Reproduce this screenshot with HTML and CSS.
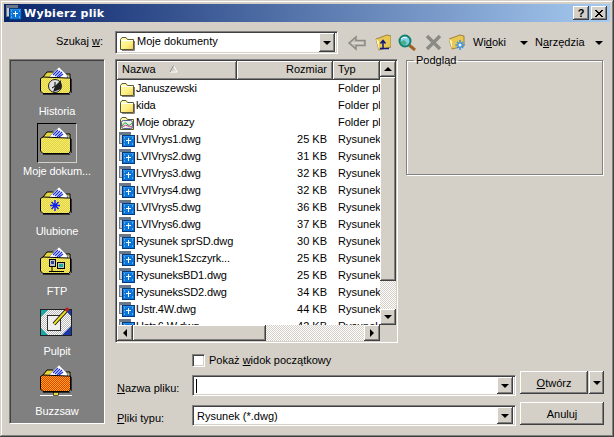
FILE: index.html
```html
<!DOCTYPE html>
<html lang="pl">
<head>
<meta charset="utf-8">
<title>Wybierz plik</title>
<link rel="stylesheet" href="styles.css">
</head>
<body>
<svg class="defs" width="0" height="0" aria-hidden="true">
  <defs>
    <pattern id="dy" width="2" height="2" patternUnits="userSpaceOnUse"><rect width="2" height="2" fill="#fff040"/><rect width="1" height="1" fill="#d8d070"/><rect x="1" y="1" width="1" height="1" fill="#d8d070"/></pattern>
    <pattern id="do" width="2" height="2" patternUnits="userSpaceOnUse"><rect width="2" height="2" fill="#ffb800"/><rect width="1" height="1" fill="#f03010"/><rect x="1" y="1" width="1" height="1" fill="#f03010"/></pattern>
    <pattern id="dg" width="2" height="2" patternUnits="userSpaceOnUse"><rect width="2" height="2" fill="#fff"/><rect width="1" height="1" fill="#b8b8b8"/><rect x="1" y="1" width="1" height="1" fill="#b8b8b8"/></pattern>
    <symbol id="fback" viewBox="0 0 32 32">
      <path d="M3 12 L7 7 H13 L15 9 L22 9 L30 9 V16 H3Z" fill="#e8d840" stroke="#000" stroke-width="1"/>
      <path d="M9 12 L19 2 L28 11 V16 H9Z" fill="#fff" stroke="#808080" stroke-width=".6"/>
      <path d="M13 10 L18 5 M15 11 L20 6 M17 12 L22 7 M19 12 L23 9" stroke="#1830e0" stroke-width="1.2" fill="none"/>
      <path d="M27 9 L31 14 L28 16Z" fill="#fff" stroke="#404040" stroke-width=".6"/>
    </symbol>
    <symbol id="ffront" viewBox="0 0 32 32">
      <path d="M.5 13.5 L3 12 L27 13 H30.5 V26 L29 28.500 H3 L.5 26Z" stroke="#000" stroke-width="1"/>
      <path d="M3 29.500 H30 M31.500 14 V28" stroke="#303030" stroke-width="1" fill="none"/>
    </symbol>
    <symbol id="fold16" viewBox="0 0 16 16">
      <path d="M1.500 4.500 L3 2.500 H7 L8.500 4.500 H14.500 V14.500 H1.500Z" fill="url(#fs)" stroke="#5a5a30"/>
      <path d="M2 5.500 H14" stroke="#fff"/>
      <path d="M15.500 6 V15.500 H3" stroke="#808080" fill="none"/>
    </symbol>
    <linearGradient id="fs" x1="0" y1="0" x2="1" y2="1"><stop offset="0" stop-color="#fffbc0"/><stop offset=".6" stop-color="#fff080"/><stop offset="1" stop-color="#f0c860"/></linearGradient>
    <symbol id="pics16" viewBox="0 0 16 16">
      <path d="M1.500 4.500 L3 2.500 H7 L8.500 4.500 H14.500 V14.500 H1.500Z" fill="url(#fs)" stroke="#5a5a30"/>
      <rect x="2.500" y="5.500" width="11" height="8" rx="2" fill="#e8f0e0" stroke="#5060a0"/>
      <path d="M3 11 Q6 6 8 9 T13 8" stroke="#20a040" fill="none"/>
      <path d="M3 12 Q7 9 9 11 T13 11" stroke="#d040a0" fill="none"/>
    </symbol>
    <symbol id="dwg" viewBox="0 0 16 16">
      <rect x=".5" y=".5" width="11" height="11" fill="#c8ccd4" stroke="#707880"/>
      <rect x="1" y="1" width="10" height="2" fill="#68788c"/>
      <rect x="3.500" y="3.500" width="12" height="11" fill="#0a74d8" stroke="#063a78"/>
      <rect x="4" y="4" width="11" height="1" fill="#2a90e8"/>
      <path d="M9.500 6 V12 M7 8.500 H12" stroke="#fff"/>
      <path d="M5 6h1M13 6h1M5 12h1M13 12h1M5 9h1" stroke="#a8e0ff"/>
    </symbol>
  </defs>
</svg>
<div class="dialog">
  <header class="titlebar">
    <svg class="title-icon" width="16" height="16"><use href="#dwg"/></svg>
    <span class="title-text">Wybierz plik</span>
    <span class="cap-btn cap-help">?</span>
    <span class="cap-btn cap-close">
      <svg width="8" height="7" viewBox="0 0 8 7"><path d="M0 0 L7 7 M1 0 L8 7 M7 0 L0 7 M8 0 L1 7" stroke="#000"/></svg>
    </span>
  </header>
  <div class="body">
    <aside class="left">
      <div class="look-in">Szukaj <u>w</u>:</div>
      <nav class="places">
        <div class="place">
          <div class="place-box">
            <svg width="32" height="32" viewBox="0 0 32 32"><use href="#fback"/><use href="#ffront" fill="url(#dy)"/>
              <circle cx="15" cy="21" r="6.500" fill="#e0e0e0" stroke="#202020"/><path d="M15 21 L21 15 L21 24 L13 27Z" fill="#202020"/><path d="M15 17 V21 L12 23" stroke="#000" fill="none"/></svg>
          </div>
          <span>Historia</span>
        </div>
        <div class="place">
          <div class="place-box selected">
            <svg width="32" height="32" viewBox="0 0 32 32"><use href="#fback"/><use href="#ffront" fill="url(#dy)"/></svg>
          </div>
          <span>Moje dokum...</span>
        </div>
        <div class="place">
          <div class="place-box">
            <svg width="32" height="32" viewBox="0 0 32 32"><use href="#fback"/><use href="#ffront" fill="url(#dy)"/>
              <path d="M15 15 V26 M10 20.500 H20 M11.500 17 L18.500 24 M18.500 17 L11.500 24" stroke="#1020f0" stroke-width="1.400"/></svg>
          </div>
          <span>Ulubione</span>
        </div>
        <div class="place">
          <div class="place-box">
            <svg width="32" height="32" viewBox="0 0 32 32"><use href="#fback"/><use href="#ffront" fill="url(#dy)"/>
              <rect x="9.500" y="14.500" width="6" height="7" fill="#c0c0c0" stroke="#000"/><rect x="11" y="16" width="3" height="3" fill="#3040a0"/>
              <rect x="17.500" y="17.500" width="7" height="6" fill="#c0c0c0" stroke="#000"/><rect x="19" y="19" width="4" height="3" fill="#10b0a0"/>
              <path d="M9 26.500 H24 M12 22 V26" stroke="#000"/></svg>
          </div>
          <span>FTP</span>
        </div>
        <div class="place">
          <div class="place-box">
            <svg width="32" height="32" viewBox="0 0 32 32">
              <rect x=".5" y="4.500" width="31" height="26" fill="url(#dg)" stroke="#202020"/>
              <path d="M1 5 H8 L1 12Z M1 30 H8 L1 23Z" fill="#18a8a8"/>
              <path d="M31 5 H25 L31 11Z M31 30 H22 L31 21Z" fill="#1838a8"/>
              <rect x="7.500" y="10.500" width="13" height="15" fill="#f0f0f0" stroke="#303030"/>
              <path d="M14 19 L26 6" stroke="#000" stroke-width="3.500"/><path d="M14 19 L26 6" stroke="#f0e020" stroke-width="2"/>
              <circle cx="27" cy="4.500" r="2" fill="#b82020"/>
            </svg>
          </div>
          <span>Pulpit</span>
        </div>
        <div class="place">
          <div class="place-box">
            <svg width="32" height="32" viewBox="0 0 32 32">
              <g transform="translate(0 -2)"><use href="#fback"/><use href="#ffront" fill="url(#do)"/></g>
              <path d="M0 30.500 H32" stroke="#fff"/><rect x="13.500" y="27.500" width="5" height="3" fill="#e8d840" stroke="#000" stroke-width=".6"/></svg>
          </div>
          <span>Buzzsaw</span>
        </div>
      </nav>
    </aside>
    <main class="right">
      <div class="toolbar">
        <div class="combo combo-look">
          <svg width="16" height="16"><use href="#fold16"/></svg>
          <span class="combo-value">Moje dokumenty</span>
          <span class="drop"><i class="tri-down"></i></span>
        </div>
        <div class="tools">
          <svg width="21" height="17" viewBox="0 0 21 17"><path d="M2 9 L9 3 V6.500 H18 V11.500 H9 V15Z" fill="#c4c0b8" stroke="#8c8a84" stroke-width="1.500"/><path d="M5 9 H16" stroke="#eceae4"/></svg>
          <svg width="16" height="17" viewBox="0 0 16 17"><path d="M1 5 L12 1 L16 2 V13 L4 16 Z" fill="#e8c850" stroke="#a08040"/><path d="M1 5 L4 16 V7Z" fill="#fff4b0"/><path d="M5 14.500 H14 M8 14.500 V7 M5.500 9.500 L8 6.500 L10.500 9.500" stroke="#101880" stroke-width="1.500" fill="none"/></svg>
          <svg width="20" height="17" viewBox="0 0 20 17"><path d="M11 11 L17 16" stroke="#a06020" stroke-width="3"/><circle cx="7" cy="7" r="5.500" fill="#80d0e8" stroke="#108070" stroke-width="2"/><path d="M3 5 Q6 2 9 4" stroke="#fff" fill="none"/><path d="M2 8 L6 6 L9 9 L6 12Z" fill="#30a060" opacity=".7"/></svg>
          <svg width="17" height="17" viewBox="0 0 17 17"><path d="M2 2 L15 15 M15 2 L2 15" stroke="#8c8a84" stroke-width="3.500"/></svg>
          <svg width="17" height="17" viewBox="0 0 17 17"><path d="M0 5 L11 1 L15 2 V12 L3 15Z" fill="#e8c850" stroke="#a08040"/><path d="M0 5 L3 15 V7Z" fill="#fff4b0"/><path d="M11 6 V16 M6.500 11 H15.500 M8 8 L14 14 M14 8 L8 14" stroke="#3090f0" stroke-width="1.500"/><circle cx="11" cy="11" r="1.500" fill="#fff"/></svg>
          <span class="menu menu-views"><span>Wi<u>d</u>oki</span><i class="tri-down"></i></span>
          <span class="menu menu-tools"><span>N<u>a</u>rzędzia</span><i class="tri-down"></i></span>
        </div>
      </div>
      <div class="middle">
        <section class="filelist">
          <div class="list-main">
            <div class="list-content">
              <div class="list-header">
                <div class="hcell hname">Nazwa<svg class="sort" width="9" height="8" viewBox="0 0 9 8"><path d="M4.500 .5 L8 7 H1Z" fill="none" stroke="#fff"/><path d="M4.500 .5 L1 7" stroke="#808080" fill="none"/></svg></div>
                <div class="hcell hsize">Rozmiar</div>
                <div class="hcell htype">Typ</div>
              </div>
              <div class="row"><div class="cname"><svg width="16" height="16"><use href="#fold16"/></svg>Januszewski</div><div class="csize"></div><div class="ctype">Folder plików</div></div>
              <div class="row"><div class="cname"><svg width="16" height="16"><use href="#fold16"/></svg>kida</div><div class="csize"></div><div class="ctype">Folder plików</div></div>
              <div class="row"><div class="cname"><svg width="16" height="16"><use href="#pics16"/></svg>Moje obrazy</div><div class="csize"></div><div class="ctype">Folder plików</div></div>
              <div class="row"><div class="cname"><svg width="16" height="16"><use href="#dwg"/></svg>LVIVrys1.dwg</div><div class="csize">25 KB</div><div class="ctype">Rysunek</div></div>
              <div class="row"><div class="cname"><svg width="16" height="16"><use href="#dwg"/></svg>LVIVrys2.dwg</div><div class="csize">31 KB</div><div class="ctype">Rysunek</div></div>
              <div class="row"><div class="cname"><svg width="16" height="16"><use href="#dwg"/></svg>LVIVrys3.dwg</div><div class="csize">32 KB</div><div class="ctype">Rysunek</div></div>
              <div class="row"><div class="cname"><svg width="16" height="16"><use href="#dwg"/></svg>LVIVrys4.dwg</div><div class="csize">32 KB</div><div class="ctype">Rysunek</div></div>
              <div class="row"><div class="cname"><svg width="16" height="16"><use href="#dwg"/></svg>LVIVrys5.dwg</div><div class="csize">36 KB</div><div class="ctype">Rysunek</div></div>
              <div class="row"><div class="cname"><svg width="16" height="16"><use href="#dwg"/></svg>LVIVrys6.dwg</div><div class="csize">37 KB</div><div class="ctype">Rysunek</div></div>
              <div class="row"><div class="cname"><svg width="16" height="16"><use href="#dwg"/></svg>Rysunek sprSD.dwg</div><div class="csize">30 KB</div><div class="ctype">Rysunek</div></div>
              <div class="row"><div class="cname"><svg width="16" height="16"><use href="#dwg"/></svg>Rysunek1Szczyrk...</div><div class="csize">25 KB</div><div class="ctype">Rysunek</div></div>
              <div class="row"><div class="cname"><svg width="16" height="16"><use href="#dwg"/></svg>RysuneksBD1.dwg</div><div class="csize">25 KB</div><div class="ctype">Rysunek</div></div>
              <div class="row"><div class="cname"><svg width="16" height="16"><use href="#dwg"/></svg>RysuneksSD2.dwg</div><div class="csize">34 KB</div><div class="ctype">Rysunek</div></div>
              <div class="row"><div class="cname"><svg width="16" height="16"><use href="#dwg"/></svg>Ustr.4W.dwg</div><div class="csize">44 KB</div><div class="ctype">Rysunek</div></div>
              <div class="row"><div class="cname"><svg width="16" height="16"><use href="#dwg"/></svg>Ustr.6.W.dwg</div><div class="csize">42 KB</div><div class="ctype">Rysunek</div></div>
            </div>
            <div class="vbar">
              <span class="sbtn"><i class="tri-up"></i></span>
              <span class="vthumb"></span>
              <span class="vtrack"></span>
              <span class="sbtn"><i class="tri-down"></i></span>
            </div>
          </div>
          <div class="hbar">
            <span class="sbtn"><i class="tri-left"></i></span>
            <span class="hthumb"></span>
            <span class="htrack"></span>
            <span class="sbtn"><i class="tri-right"></i></span>
            <span class="corner"></span>
          </div>
        </section>
        <fieldset class="preview"><legend>Podgląd</legend></fieldset>
      </div>
      <form class="form">
        <label class="show-start"><span class="checkbox"></span><span>Pokaż <u>w</u>idok początkowy</span></label>
        <div class="form-grid">
          <span class="flabel"><u>N</u>azwa pliku:</span>
          <div class="combo combo-field"><span class="caret"></span><span class="drop"><i class="tri-down"></i></span></div>
          <div class="btn-split"><span class="btn btn-open"><span><u>O</u>twórz</span></span><span class="btn btn-more"><i class="tri-down"></i></span></div>
          <span class="flabel"><u>P</u>liki typu:</span>
          <div class="combo combo-field"><span class="combo-value">Rysunek (*.dwg)</span><span class="drop"><i class="tri-down"></i></span></div>
          <span class="btn btn-cancel">Anuluj</span>
        </div>
      </form>
    </main>
  </div>
</div>
</body>
</html>
```

FILE: styles.css
```css
* { box-sizing: border-box; }
html, body { margin: 0; padding: 0; }
body {
  width: 614px;
  height: 437px;
  overflow: hidden;
  background: #d4d0c8;
  font: 11px/13px "Liberation Sans", Arial, sans-serif;
  color: #000;
}
.defs { display: block; width: 0; height: 0; }
i { display: block; font-style: normal; }

.dialog {
  width: 614px;
  height: 437px;
  padding: 4px 4px 0;
  background: #d4d0c8;
  box-shadow: inset -1px -1px #404040, inset 1px 1px #d4d0c8, inset -2px -2px #808080, inset 2px 2px #fff;
  overflow: hidden;
}

.titlebar {
  height: 18px;
  display: flex;
  align-items: center;
  padding: 0 3px 0 2px;
  background: linear-gradient(90deg, #0a246a, #a6caf0);
  color: #fff;
  font-weight: bold;
}
.title-icon { flex: none; }
.title-text {
  margin-left: 2px;
  flex: 1;
  font-family: "DejaVu Sans", sans-serif;
  letter-spacing: 0.3px;
}
.cap-btn {
  width: 16px;
  height: 14px;
  display: flex;
  align-items: center;
  justify-content: center;
  background: #d4d0c8;
  color: #000;
  font-size: 11px;
  box-shadow: inset -1px -1px #404040, inset 1px 1px #fff, inset -2px -2px #808080;
}
.cap-help { margin-right: 2px; }

.body {
  display: flex;
  gap: 10px;
  padding: 9px 0 0 5px;
}

.left { width: 96px; flex: none; }
.look-in {
  height: 23px;
  margin-bottom: 5px;
  margin-right: 2px;
  text-align: right;
  line-height: 21px;
}
.places {
  height: 365px;
  padding: 3px 2px 0;
  background: #808080;
  color: #fff;
  border: 1px solid;
  border-color: #808080 #fff #fff #808080;
  box-shadow: inset 1px 1px #404040;
}
.place {
  height: 60px;
  display: flex;
  flex-direction: column;
  align-items: center;
  letter-spacing: -0.1px;
}
.place span { margin-top: 2px; white-space: nowrap; }
.place-box {
  width: 40px;
  height: 40px;
  display: flex;
  align-items: center;
  justify-content: center;
  padding: 0 2px 4px 0;
}
.place-box.selected {
  border: 1px solid;
  border-color: #000 #d4d0c8 #d4d0c8 #000;
}

.right { width: 489px; flex: none; }
.toolbar {
  display: flex;
  height: 23px;
  margin-bottom: 5px;
}
.combo {
  position: relative;
  display: flex;
  align-items: center;
  background: #fff;
  border: 1px solid;
  border-color: #808080 #fff #fff #808080;
  box-shadow: inset 1px 1px #404040, inset -1px -1px #d4d0c8;
  padding: 2px;
}
.combo-look { width: 223px; height: 23px; padding-left: 3px; }
.combo-value { flex: 1; margin-left: 2px; }
.combo-look .combo-value { padding-bottom: 2px; }
.combo-field .combo-value { padding-top: 2px; }
.drop {
  width: 16px;
  height: 17px;
  margin-left: auto;
  display: flex;
  align-items: center;
  justify-content: center;
  background: #d4d0c8;
  box-shadow: inset -1px -1px #404040, inset 1px 1px #fff, inset -2px -2px #808080;
}
.combo-look .drop { height: 19px; }

.tools {
  display: flex;
  align-items: center;
  gap: 7px;
  margin-left: 9px;
  flex: 1;
}
.menu { display: flex; align-items: center; }
.menu-views { width: 55px; }
.menu-views .tri-down { margin-left: 14px; }
.menu-tools .tri-down { margin-left: 10px; }

.tri-down { width: 0; height: 0; border: 4px solid transparent; border-bottom: 0; border-top-color: #000; }
.tri-up { width: 0; height: 0; border: 4px solid transparent; border-top: 0; border-bottom-color: #000; }
.tri-left { width: 0; height: 0; border: 4px solid transparent; border-left: 0; border-right-color: #000; }
.tri-right { width: 0; height: 0; border: 4px solid transparent; border-right: 0; border-left-color: #000; }

.middle {
  display: flex;
  align-items: flex-start;
  gap: 8px;
}
.filelist {
  width: 283px;
  height: 284px;
  display: flex;
  flex-direction: column;
  background: #fff;
  border: 1px solid;
  border-color: #808080 #fff #fff #808080;
  box-shadow: inset 1px 1px #404040, inset -1px -1px #d4d0c8;
  padding: 1px;
}
.list-main { display: flex; height: 264px; }
.list-content { width: 263px; overflow: hidden; }
.list-header { display: flex; height: 19px; }
.hcell {
  height: 19px;
  padding: 2px 0 0 5px;
  background: #d4d0c8;
  white-space: nowrap;
  overflow: hidden;
  box-shadow: inset -1px -1px #404040, inset 1px 1px #fff, inset -2px -2px #808080;
}
.hname { width: 120px; display: flex; }
.sort { margin: 2px 0 0 13px; }
.hsize { width: 96px; text-align: right; padding: 2px 6px 0 0; }
.htype { width: 47px; }

.row { display: flex; height: 17px; align-items: center; white-space: nowrap; }
.cname {
  width: 120px;
  flex: none;
  display: flex;
  align-items: center;
  padding-left: 2px;
  gap: 1px;
  overflow: hidden;
  letter-spacing: -0.15px;
}
.cname svg { flex: none; }
.csize { width: 90px; flex: none; text-align: right; }
.ctype { width: 53px; flex: none; padding-left: 11px; overflow: hidden; }

.vbar { width: 16px; flex: none; display: flex; flex-direction: column; }
.sbtn {
  width: 16px;
  height: 16px;
  flex: none;
  display: flex;
  align-items: center;
  justify-content: center;
  background: #d4d0c8;
  box-shadow: inset -1px -1px #404040, inset 1px 1px #fff, inset -2px -2px #808080;
}
.vthumb, .hthumb {
  background: #d4d0c8;
  box-shadow: inset -1px -1px #404040, inset 1px 1px #fff, inset -2px -2px #808080;
}
.vthumb { height: 204px; flex: none; }
.vtrack, .htrack { flex: 1; background: repeating-conic-gradient(#d4d0c8 0 25%, #fff 0 50%) 0 0 / 2px 2px; }
.hbar { display: flex; height: 16px; flex: none; }
.hthumb { width: 133px; flex: none; }
.corner { width: 16px; flex: none; background: #d4d0c8; }

.preview {
  width: 197px;
  height: 121px;
  margin: -5px 0 0;
  padding: 0;
  border: 1px solid #808080;
  box-shadow: 1px 1px 0 #fff, inset 1px 1px 0 #fff;
}
.preview legend { margin-left: 7px; padding: 0 2px; line-height: 13px; }

.form { margin-top: 11px; }
.show-start { display: flex; align-items: center; height: 13px; padding-left: 77px; }
.checkbox {
  width: 13px;
  height: 13px;
  margin-right: 4px;
  background: #fff;
  border: 1px solid;
  border-color: #808080 #fff #fff #808080;
  box-shadow: inset 1px 1px #404040, inset -1px -1px #d4d0c8;
}
.form-grid {
  display: grid;
  grid-template-columns: 77px 324px 88px;
  grid-template-rows: 25px 24px;
  row-gap: 6px;
  margin-top: 4px;
}
.flabel { align-self: end; margin-bottom: 1px; padding-left: 2px; }
.combo-field { height: 21px; align-self: end; padding-left: 2px; }
.caret { width: 1px; height: 14px; background: #000; margin-left: 1px; }
.btn-split, .btn-cancel { margin-left: 4px; }
.btn-split { display: flex; gap: 1px; height: 23px; }
.btn {
  height: 23px;
  display: flex;
  align-items: center;
  justify-content: center;
  padding-top: 1px;
  background: #d4d0c8;
  box-shadow: inset -1px -1px #404040, inset 1px 1px #fff, inset -2px -2px #808080;
}
.btn-open { width: 68px; }
.btn-more { width: 15px; }
```
